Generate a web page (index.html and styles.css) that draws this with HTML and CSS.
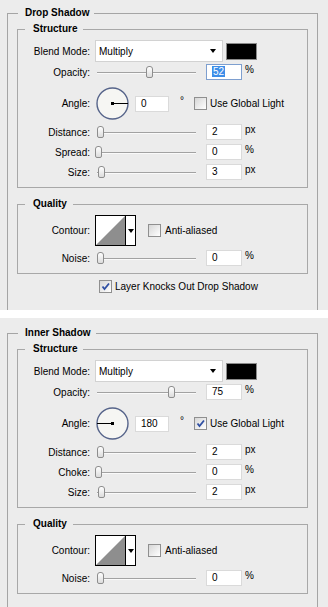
FILE: index.html
```html
<!doctype html>
<html>
<head>
    <meta charset="UTF-8">
    <title>Layer Style</title>
    <link rel="stylesheet" href="styles.css">
</head>
<body>
    <div class="panel">
        <fieldset class="outer">
            <legend>Drop Shadow</legend>
            <fieldset class="group">
                <legend>Structure</legend>
                <div class="row blend">
                    <span class="lbl">Blend Mode:</span>
                    <div class="select"><span>Multiply</span><i class="arrow"></i></div>
                    <span class="swatch"></span>
                </div>
                <div class="row op">
                    <span class="lbl">Opacity:</span>
                    <div class="slider"><span class="thumb" style="left:49px"></span></div>
                    <span class="field focus"><span class="hl">52</span></span>
                    <span class="unit">%</span>
                </div>
                <div class="row angle">
                    <span class="lbl">Angle:</span>
                    <svg class="dial" width="33" height="33" viewBox="0 0 33 33">
                        <circle cx="16.5" cy="16.5" r="15.5" fill="#f6f6f3" stroke="#56648a" stroke-width="1.4"/>
                        <line x1="16.5" y1="16.5" x2="32" y2="16.5" stroke="#000" stroke-width="1"/>
                        <rect x="15" y="15" width="3" height="3" fill="#000"/>
                    </svg>
                    <span class="field short">0</span>
                    <span class="deg">°</span>
                    <span class="check"></span>
                    <span class="ctext">Use Global Light</span>
                </div>
                <div class="row">
                    <span class="lbl">Distance:</span>
                    <div class="slider"><span class="thumb" style="left:0"></span></div>
                    <span class="field">2</span>
                    <span class="unit">px</span>
                </div>
                <div class="row">
                    <span class="lbl">Spread:</span>
                    <div class="slider"><span class="thumb" style="left:-2px"></span></div>
                    <span class="field">0</span>
                    <span class="unit">%</span>
                </div>
                <div class="row">
                    <span class="lbl">Size:</span>
                    <div class="slider"><span class="thumb" style="left:1px"></span></div>
                    <span class="field">3</span>
                    <span class="unit">px</span>
                </div>
            </fieldset>
            <fieldset class="group quality">
                <legend>Quality</legend>
                <div class="row contour-row">
                    <span class="lbl">Contour:</span>
                    <div class="contour">
                        <svg width="29" height="29" viewBox="0 0 29 29"><polygon points="0,29 29,0 29,29" fill="#8e8e8e"/></svg>
                        <span class="drop"><i class="arrow"></i></span>
                    </div>
                    <span class="check aa"></span>
                    <span class="ctext">Anti-aliased</span>
                </div>
                <div class="row">
                    <span class="lbl">Noise:</span>
                    <div class="slider"><span class="thumb" style="left:0"></span></div>
                    <span class="field">0</span>
                    <span class="unit">%</span>
                </div>
            </fieldset>
            <div class="row knock">
                <span class="check on"><svg width="11" height="11" viewBox="0 0 11 11"><path d="M2.5 5.5 L4.5 8 L9 2.5" fill="none" stroke="#2f4fa3" stroke-width="1.8"/></svg></span>
                <span class="ctext">Layer Knocks Out Drop Shadow</span>
            </div>
        </fieldset>
    </div>

    <div class="panel">
        <fieldset class="outer">
            <legend>Inner Shadow</legend>
            <fieldset class="group">
                <legend>Structure</legend>
                <div class="row blend">
                    <span class="lbl">Blend Mode:</span>
                    <div class="select"><span>Multiply</span><i class="arrow"></i></div>
                    <span class="swatch"></span>
                </div>
                <div class="row op">
                    <span class="lbl">Opacity:</span>
                    <div class="slider"><span class="thumb" style="left:71px"></span></div>
                    <span class="field">75</span>
                    <span class="unit">%</span>
                </div>
                <div class="row angle">
                    <span class="lbl">Angle:</span>
                    <svg class="dial" width="33" height="33" viewBox="0 0 33 33">
                        <circle cx="16.5" cy="16.5" r="15.5" fill="#f6f6f3" stroke="#56648a" stroke-width="1.4"/>
                        <line x1="1" y1="16.5" x2="16.5" y2="16.5" stroke="#000" stroke-width="1"/>
                        <rect x="15" y="15" width="3" height="3" fill="#000"/>
                    </svg>
                    <span class="field short">180</span>
                    <span class="deg">°</span>
                    <span class="check on"><svg width="11" height="11" viewBox="0 0 11 11"><path d="M2.5 5.5 L4.5 8 L9 2.5" fill="none" stroke="#2f4fa3" stroke-width="1.8"/></svg></span>
                    <span class="ctext">Use Global Light</span>
                </div>
                <div class="row">
                    <span class="lbl">Distance:</span>
                    <div class="slider"><span class="thumb" style="left:0"></span></div>
                    <span class="field">2</span>
                    <span class="unit">px</span>
                </div>
                <div class="row">
                    <span class="lbl">Choke:</span>
                    <div class="slider"><span class="thumb" style="left:-2px"></span></div>
                    <span class="field">0</span>
                    <span class="unit">%</span>
                </div>
                <div class="row">
                    <span class="lbl">Size:</span>
                    <div class="slider"><span class="thumb" style="left:1px"></span></div>
                    <span class="field">2</span>
                    <span class="unit">px</span>
                </div>
            </fieldset>
            <fieldset class="group quality">
                <legend>Quality</legend>
                <div class="row contour-row">
                    <span class="lbl">Contour:</span>
                    <div class="contour">
                        <svg width="29" height="29" viewBox="0 0 29 29"><polygon points="0,29 29,0 29,29" fill="#8e8e8e"/></svg>
                        <span class="drop"><i class="arrow"></i></span>
                    </div>
                    <span class="check aa"></span>
                    <span class="ctext">Anti-aliased</span>
                </div>
                <div class="row">
                    <span class="lbl">Noise:</span>
                    <div class="slider"><span class="thumb" style="left:0"></span></div>
                    <span class="field">0</span>
                    <span class="unit">%</span>
                </div>
            </fieldset>
        </fieldset>
    </div>
</body>
</html>
```

FILE: styles.css
```css
* { box-sizing: border-box; }
body { margin: 0; background: #fff; font: 10px "Liberation Sans", Arial, sans-serif; color: #000; }

.panel { background: #ececec; height: 310px; overflow: hidden; padding-top: 6px; }
.panel + .panel { margin-top: 8px; height: 289px; padding-top: 8px; }

fieldset { margin: 0; padding: 0; border: 1px solid #a5a5a5; min-width: 0; }
legend { font-weight: bold; line-height: 14px; padding: 0 5px 0 7px; margin-left: 10px; }
.outer { margin: 0 10px 0 7px; padding: 2px 0 40px; }
.group { margin: 0 9px; padding: 4px 0 7px; border-color: #a8a8a8; }
.group legend { margin-left: 7px; padding: 0 6px 0 8px; }
.quality { margin-top: 9px; }

.row { display: flex; align-items: center; height: 16px; margin-top: 4px; }
.row.blend { height: 22px; margin-top: 0; }
.row.op { margin-top: 2px; }
.row.angle { height: 33px; margin-top: 7px; }
.row.contour-row { height: 31px; margin-top: 0; }
.row.knock { padding-left: 91px; }
.lbl { width: 72px; flex: none; text-align: right; }

.arrow { display: block; width: 0; height: 0; border-top: 4px solid #000; border-left: 3px solid transparent; border-right: 3px solid transparent; }

.select { margin-left: 5px; width: 128px; height: 22px; background: #fff; border: 1px solid #d2d2d2; display: flex; align-items: center; justify-content: space-between; padding: 0 6px 0 3px; }
.swatch { margin-left: 3px; width: 31px; height: 17px; background: #000; border: 1px solid #8a8a8a; }

.slider { margin-left: 7px; width: 99px; height: 16px; position: relative; flex: none; }
.slider::before { content: ""; position: absolute; left: 0; right: 0; top: 8px; height: 1px; background: #a2a2a2; box-shadow: 0 1px 0 #fafafa; }
.thumb { position: absolute; top: 2px; width: 7px; height: 12px; border: 1px solid #8d8d8d; border-radius: 3px 3px 2px 2px; background: linear-gradient(#ffffff, #dcdcdc); }

.field { margin-left: 10px; width: 36px; height: 16px; background: #fff; border: 1px solid #dadada; padding-left: 5px; line-height: 14px; flex: none; }
.field.focus { border-color: #7e9fcf; }
.field.short { margin-left: 6px; width: 34px; }
.hl { background: #3d8ee8; color: #fff; padding: 0 1px; }
.unit { margin-left: 3px; align-self: flex-start; line-height: 12px; }

.dial { margin-left: 6px; flex: none; }
.deg { margin-left: 11px; align-self: flex-start; margin-top: 8px; }

.check { margin-left: 10px; width: 13px; height: 13px; border: 1px solid #8f8f8f; background: linear-gradient(135deg, #d6d6d6, #ffffff); flex: none; display: flex; align-items: center; justify-content: center; }
.check.aa { margin-left: 12px; }
.knock .check { margin-left: 0; }
.ctext { margin-left: 3px; }
.check.aa + .ctext { margin-left: 4px; }

.contour { margin-left: 5px; width: 41px; height: 31px; border: 1px solid #000; background: #fff; display: flex; }
.contour svg { display: block; }
.drop { flex: 1; border-left: 1px solid #000; display: flex; align-items: center; justify-content: center; }
.drop .arrow { border-top-width: 4px; border-left-width: 3px; border-right-width: 3px; }
```
